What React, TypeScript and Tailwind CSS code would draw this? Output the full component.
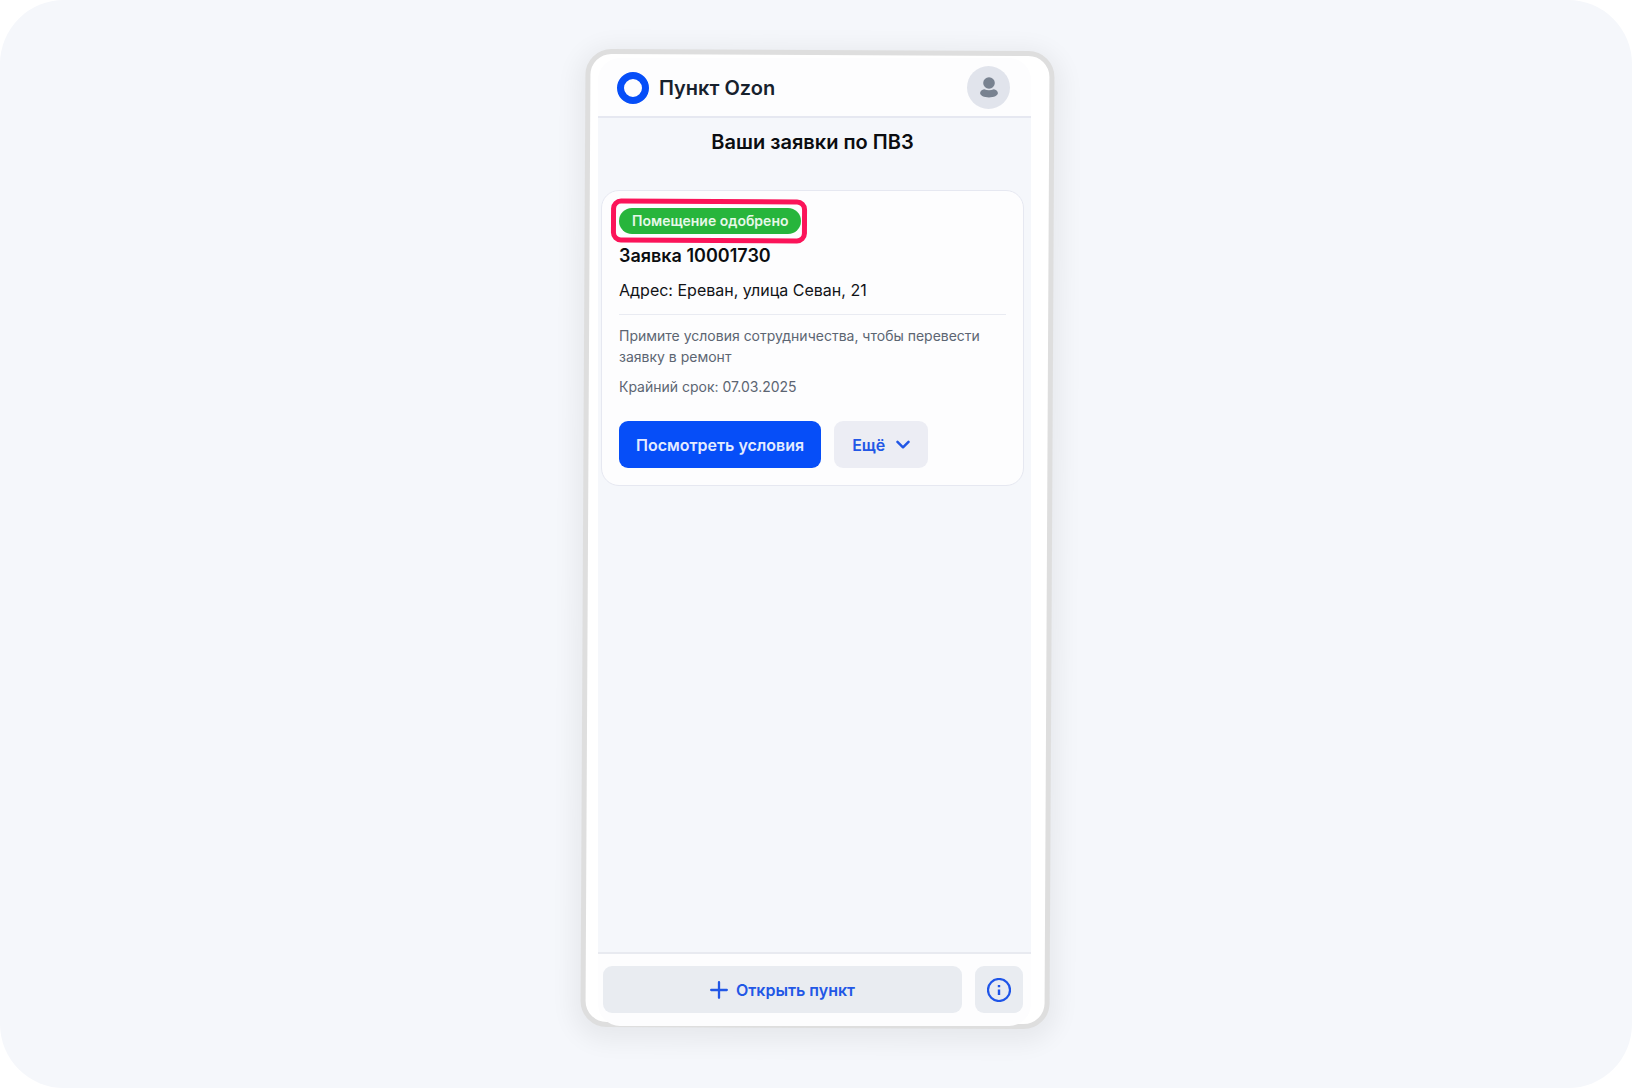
import clsx from "clsx";

type Request = {
  id: string;
  status: string;
  address: string;
  hint: string;
  deadline: string;
};

const requests: Request[] = [
  {
    id: "10001730",
    status: "Помещение одобрено",
    address: "Ереван, улица Севан, 21",
    hint: "Примите условия сотрудничества, чтобы перевести заявку в ремонт",
    deadline: "07.03.2025"
  }
];

const buttonClass =
  "flex h-[47px] items-center justify-center rounded-[9px] text-base font-semibold";

function Header() {
  return (
    <header className="flex h-[60px] items-center justify-between border-b-2 border-[#e6e8f1] pr-[21px] pl-[19px]">
      <a href="#" className="flex items-center gap-[10px] pt-0.5">
        <span className="size-8 rounded-full border-[7px] border-[#064ef8]" />
        <span className="text-xl font-semibold text-[#17212d]">Пункт Ozon</span>
      </a>
      <button
        type="button"
        aria-label="Профиль"
        className="flex size-[43px] items-center justify-center rounded-full bg-[#e1e4ec]"
      >
        <svg viewBox="0 0 20 22" className="h-[22px] w-5 fill-[#788290]" aria-hidden="true">
          <circle cx="10" cy="7" r="5.8" />
          <path d="M5.200 13.200c3 1.500 6.600 1.500 9.600 0C16.800 13.400 18.900 15.200 18.900 17c0 2.800-4 4.400-8.900 4.400S1.100 19.800 1.100 17c0-1.800 2.100-3.600 4.100-3.800z" />
        </svg>
      </button>
    </header>
  );
}

function RequestCard({ request }: { request: Request }) {
  return (
    <article className="rounded-[18px] border border-[#e6e8f1] bg-[#fdfdfe] p-[17px]">
      <div className="relative w-fit">
        <span className="flex h-[26px] items-center rounded-full bg-[#27b53c] px-[13px] text-sm font-semibold text-[#e6f8e8]">
          {request.status}
        </span>
        <span className="pointer-events-none absolute -inset-y-[9px] -right-1.5 -left-2 rotate-[0.3deg] rounded-[10px] border-[5px] border-[#fb1459]" />
      </div>
      <h2 className="mt-[10px] text-lg leading-6 font-semibold text-[#0b0d10]">Заявка {request.id}</h2>
      <p className="mt-[10px] text-base leading-6 text-[#111317]">Адрес: {request.address}</p>
      <hr className="mt-3 border-[#e9ebf2]" />
      <p className="mt-[10px] text-sm leading-[21px] text-[#5c6572]">{request.hint}</p>
      <p className="mt-[9px] text-sm leading-[21px] text-[#5c6572]">
        Крайний срок: {request.deadline}
      </p>
      <div className="mt-6 flex gap-[13px]">
        <button
          type="button"
          className={clsx(buttonClass, "bg-[#064ef8] px-[17px] text-[#e3ebff]")}
        >
          Посмотреть условия
        </button>
        <button
          type="button"
          className={clsx(buttonClass, "gap-[11px] bg-[#ecedf4] px-[18px] text-[#2257e6]")}
        >
          Ещё
          <svg viewBox="0 0 14 9" className="h-[9px] w-[14px]" fill="none" stroke="currentColor" aria-hidden="true">
            <path d="M1.500 1.900L7 7.300l5.500-5.400" strokeWidth="2.500" strokeLinecap="round" strokeLinejoin="round" />
          </svg>
        </button>
      </div>
    </article>
  );
}

function Footer() {
  return (
    <footer className="flex gap-[13px] border-t-2 border-[#e8eaf0] pt-3 pr-2 pb-[13px] pl-[5px]">
      <button type="button" className={clsx(buttonClass, "flex-1 gap-2 bg-[#e9ecf1] text-[#2257e6]")}>
        <svg viewBox="0 0 18 18" className="size-[18px]" fill="none" stroke="currentColor" aria-hidden="true">
          <path d="M9 1.200v15.600M1.200 9h15.600" strokeWidth="2.300" strokeLinecap="round" />
        </svg>
        Открыть пункт
      </button>
      <button
        type="button"
        aria-label="Информация"
        className={clsx(buttonClass, "w-12 bg-[#e9ecf1] text-[#1f55e8]")}
      >
        <svg viewBox="0 0 24 24" className="size-6" fill="none" stroke="currentColor" aria-hidden="true">
          <circle cx="12" cy="12" r="11" strokeWidth="2.200" />
          <path d="M12 11.500v5.500M12 7v2.200" strokeWidth="2.400" />
        </svg>
      </button>
    </footer>
  );
}

export default function App() {
  return (
    <div className="min-h-screen bg-white font-['Inter',sans-serif]">
      <main className="flex min-h-screen flex-col items-center rounded-[64px] bg-[#f5f7fb] pt-[50px] pb-[60px] pl-[3px]">
        <div className="grid w-full max-w-[469px] flex-1">
          <div className="col-start-1 row-start-1 rotate-[0.3deg] rounded-[26px] border-[5px] border-[#dedede] bg-white shadow-[0_6px_24px_8px_rgba(0,0,0,0.06)]" />
          <div className="relative col-start-1 row-start-1 mt-2 mr-[21px] mb-0.5 ml-[15px] flex flex-col overflow-hidden rounded-[22px] bg-[#fdfdfe]">
            <Header />
            <section className="flex-1 bg-[#f5f7fb] pr-[7px] pl-[3px]">
              <h1 className="pt-[10px] pb-[34px] text-center text-xl leading-7 font-semibold text-[#0b0d10]">
                Ваши заявки по ПВЗ
              </h1>
              {requests.map((request) => (
                <RequestCard key={request.id} request={request} />
              ))}
            </section>
            <Footer />
          </div>
        </div>
      </main>
    </div>
  );
}
